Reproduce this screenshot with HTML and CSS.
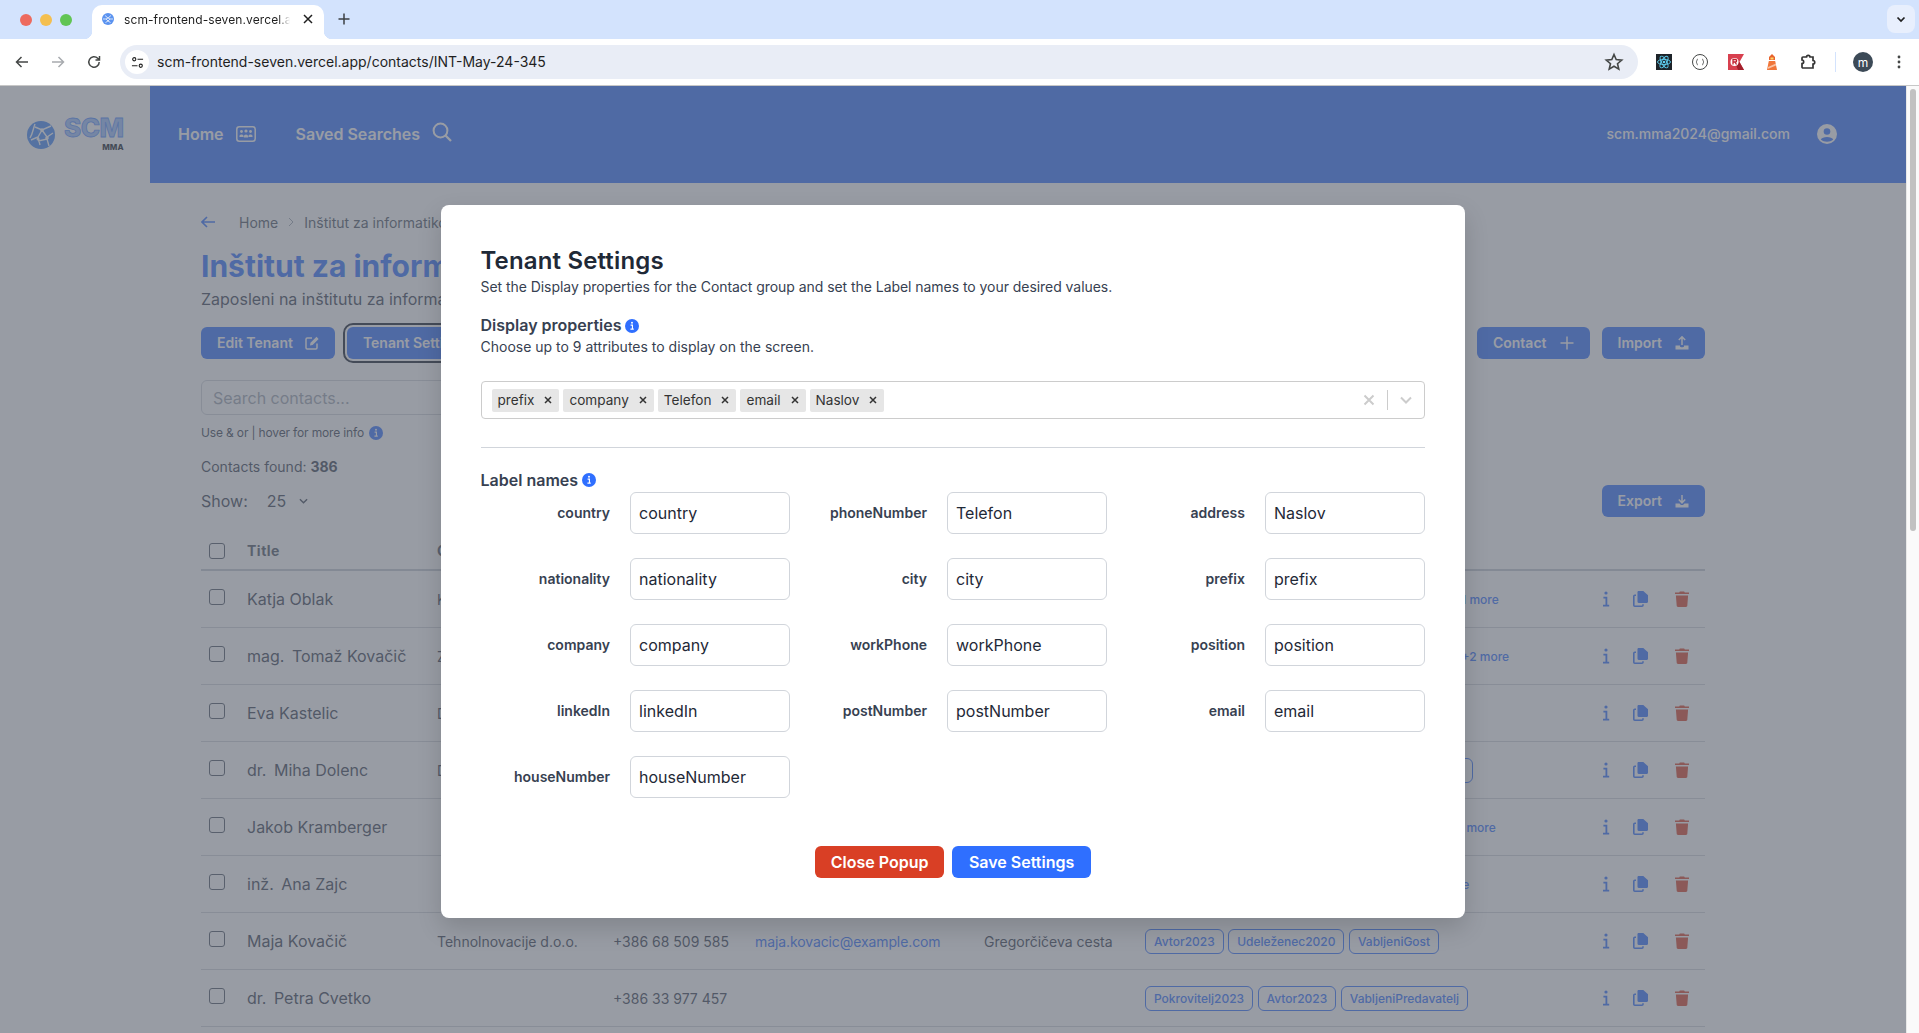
FILE: index.html
```html
<!DOCTYPE html>
<html lang="en">
<head>
    <meta charset="UTF-8">
    <title>scm-frontend-seven.vercel.app/contacts/INT-May-24-345</title>
    <link rel="stylesheet" href="styles.css">
</head>
<body>
    <!-- shared icons -->
    <svg class="icon-defs" aria-hidden="true">
        <symbol id="i-info" viewBox="0 0 8 16"><circle cx="4" cy="2" r="1.6" fill="currentColor"/><path d="M1.4 6.6H4.4V14.4M1 14.6H7.2" fill="none" stroke="currentColor" stroke-width="1.8"/></symbol>
        <symbol id="i-copy" viewBox="0 0 15 16"><path d="M4.500 1.200C4.500 .5 5 0 5.700 0H10.300L15 4.200V10.800C15 11.500 14.500 12 13.800 12H5.700C5 12 4.500 11.500 4.500 10.800Z" fill="currentColor"/><path d="M3 4.300H1.800C1.200 4.300.8 4.700.8 5.300V14.200C.8 14.800 1.200 15.200 1.800 15.200H9C9.600 15.200 10 14.800 10 14.200V13.200" fill="none" stroke="currentColor" stroke-width="1.600"/></symbol>
        <symbol id="i-trash" viewBox="1 0 14 16"><path d="M5.200 1.600 5.800.4H10.200L10.800 1.600H15V3H1V1.600ZM1.900 4.400H14.100L13.300 14.800C13.200 15.500 12.800 16 12 16H4C3.200 16 2.800 15.500 2.700 14.800Z" fill="currentColor"/></symbol>
        <symbol id="i-badge" viewBox="0 0 16 16"><circle cx="8" cy="8" r="8" fill="currentColor"/><circle cx="8" cy="4.300" r="1.100" fill="#fff"/><path d="M6.400 7H8.500V11.300M6.200 11.600H10" fill="none" stroke="#fff" stroke-width="1.300"/></symbol>
        <symbol id="i-cross" viewBox="0 0 14 14"><path d="M4 4 10 10M10 4 4 10" fill="none" stroke="currentColor" stroke-width="1.500"/></symbol>
    </svg>

    <div class="tabstrip">
        <div class="lights">
            <span class="light light-red"></span>
            <span class="light light-yellow"></span>
            <span class="light light-green"></span>
        </div>
        <div class="tab">
            <svg class="favicon" viewBox="0 0 12 12"><circle cx="6" cy="6" r="6" fill="#5b93f0"/><path d="M3 2.500 6 5 9 2.500M1 6H4L6 5 8 6H11M3.500 9.500 6 8 8.500 9.500M4 6 6 8 8 6" fill="none" stroke="#d6e4fb" stroke-width="1"/></svg>
            <span class="tab-title">scm-frontend-seven.vercel.app</span>
            <svg class="tab-close" viewBox="0 0 14 14"><path d="M3 3 11 11M11 3 3 11" fill="none" stroke="#1f1f1f" stroke-width="1.500"/></svg>
        </div>
        <svg class="new-tab" viewBox="0 0 14 14"><path d="M7 1.500V12.500M1.500 7H12.500" fill="none" stroke="#3c4043" stroke-width="1.500"/></svg>
        <div class="tab-list">
            <svg viewBox="0 0 12 12"><path d="M2.500 4.500 6 8 9.500 4.500" fill="none" stroke="#1f1f1f" stroke-width="1.700"/></svg>
        </div>
    </div>

    <div class="toolbar">
        <div class="tool"><svg viewBox="0 0 16 16"><path d="M14 8H2.500M7.500 3 2.500 8 7.500 13" fill="none" stroke="#444746" stroke-width="1.500"/></svg></div>
        <div class="tool"><svg viewBox="0 0 16 16"><path d="M2 8H13.500M8.500 3 13.500 8 8.500 13" fill="none" stroke="#a8abaf" stroke-width="1.500"/></svg></div>
        <div class="tool"><svg viewBox="0 0 16 16"><path d="M13.200 8A5.200 5.200 0 1 1 11.700 4.300L13.500 6M13.500 2V6H9.500" fill="none" stroke="#444746" stroke-width="1.500"/></svg></div>
        <div class="omnibox">
            <span class="site-info">
                <svg viewBox="0 0 14 14"><circle cx="3.500" cy="3.500" r="1.700" fill="none" stroke="#1f1f1f" stroke-width="1.200"/><path d="M7 3.500H13M1 10.500H7" stroke="#1f1f1f" stroke-width="1.200"/><circle cx="10.500" cy="10.500" r="1.700" fill="none" stroke="#1f1f1f" stroke-width="1.200"/></svg>
            </span>
            <span class="url">scm-frontend-seven.vercel.app/contacts/INT-May-24-345</span>
            <svg class="star" viewBox="0 0 20 20"><path d="M10 2.500 12.200 7.600 17.700 8.100 13.500 11.700 14.800 17.100 10 14.300 5.200 17.100 6.500 11.700 2.300 8.100 7.800 7.600Z" fill="none" stroke="#444746" stroke-width="1.600"/></svg>
        </div>
        <div class="extensions">
            <div class="tool">
                <svg viewBox="0 0 16 16"><rect width="16" height="16" fill="#1d2329"/><g fill="none" stroke="#5fd0f3" stroke-width=".9"><ellipse cx="8" cy="8" rx="6.500" ry="2.600"/><ellipse cx="8" cy="8" rx="6.500" ry="2.600" transform="rotate(60 8 8)"/><ellipse cx="8" cy="8" rx="6.500" ry="2.600" transform="rotate(120 8 8)"/></g><circle cx="8" cy="8" r="1.300" fill="#5fd0f3"/></svg>
            </div>
            <div class="tool">
                <svg viewBox="0 0 16 16"><circle cx="8" cy="8" r="7.500" fill="#fff" stroke="#444746" stroke-width="1"/><path d="M5.800 5C4.800 5 5.200 7.500 4 8 5.200 8.500 4.800 11 5.800 11M10.200 5C11.200 5 10.800 7.500 12 8 10.800 8.500 11.200 11 10.200 11" fill="none" stroke="#444746" stroke-width=".9"/></svg>
            </div>
            <div class="tool">
                <svg viewBox="0 0 16 16"><path d="M0 0H16L11.500 8 16 16H0Z" fill="#d8404f"/><path d="M8 11 11.500 8 16 16H10Z" fill="#a3202c"/><circle cx="6.500" cy="8" r="4" fill="#fff"/><path d="M5 10.500V5.500H7.500C9 5.500 9 8 7.500 8H5.500M7 8 8.500 10.500" fill="none" stroke="#c2202f" stroke-width="1.300"/></svg>
            </div>
            <div class="tool">
                <svg viewBox="0 0 16 16"><path d="M8 0 11 3V6H5V3Z" fill="#e8622c"/><path d="M4.800 7H11.200L13 16H3Z" fill="#f0763a"/><path d="M4 13 12 9.500V11.500L3.700 15Z" fill="#f9c2a4"/><rect x="6.500" y="3.500" width="3" height="2" fill="#fbd76b"/></svg>
            </div>
            <div class="tool">
                <svg viewBox="0 0 16 16"><path d="M5.500 3H6.500C6.500 .8 10 .8 10 3H13V6.500C15.300 6.500 15.300 10 13 10V14H3C2.400 14 2 13.600 2 13V9.500C4.200 9.500 4.200 6 2 6V4C2 3.400 2.400 3 3 3Z" fill="none" stroke="#333" stroke-width="1.700"/></svg>
            </div>
        </div>
        <span class="toolbar-sep"></span>
        <span class="avatar">m</span>
        <div class="tool"><svg viewBox="0 0 16 16"><g fill="#444746"><circle cx="8" cy="3" r="1.400"/><circle cx="8" cy="8" r="1.400"/><circle cx="8" cy="13" r="1.400"/></g></svg></div>
    </div>

    <div class="viewport">
        <div class="app">
            <header class="topbar">
                <div class="brand">
                    <svg class="brand-globe" viewBox="0 0 28 28">
                        <circle cx="14" cy="14" r="14" fill="#3f86f7"/>
                        <g fill="none" stroke="#fff" stroke-width="1.400">
                            <path d="M8 3C6 8 6 12 3 17M8 6 15 9 24 5M15 9 11 16 4 19M15 9 20 16 26 12M11 16 13 24M11 20 20 18 22 25M20 16 20 18"/>
                        </g>
                        <g fill="#fff"><circle cx="15" cy="9" r="1.800"/><circle cx="20" cy="17" r="1.800"/><circle cx="11" cy="18" r="1.500"/></g>
                    </svg>
                    <div class="brand-text">
                        <span class="brand-scm">SCM</span>
                        <span class="brand-mma">MMA</span>
                    </div>
                </div>
                <nav class="topnav">
                    <a class="nav-link">Home
                        <svg class="nav-icon" viewBox="0 0 20 16"><rect x=".8" y=".8" width="18.400" height="14.400" rx="2.500" fill="none" stroke="currentColor" stroke-width="1.500"/><g fill="currentColor"><circle cx="5.500" cy="5.500" r="1.400"/><circle cx="10" cy="5" r="1.600"/><circle cx="14.500" cy="5.500" r="1.400"/><path d="M3.500 10C3.500 8 7.500 8 7.500 10V11H3.500ZM7.800 11C7.800 7.700 12.200 7.700 12.200 11V11.500H7.800ZM12.500 10C12.500 8 16.500 8 16.500 10V11H12.500Z"/></g></svg>
                    </a>
                    <a class="nav-link">Saved Searches
                        <svg class="nav-icon nav-icon-up" viewBox="0 0 20 20"><circle cx="8.500" cy="8.500" r="6.900" fill="none" stroke="currentColor" stroke-width="2"/><path d="M13.500 13.500 19 19" stroke="currentColor" stroke-width="2.300"/></svg>
                    </a>
                </nav>
                <div class="account">
                    <span>scm.mma2024@gmail.com</span>
                    <svg class="account-icon" viewBox="0 0 20 20"><circle cx="10" cy="10" r="10" fill="currentColor"/><circle cx="10" cy="7.500" r="3.300" fill="#2f6fff"/><path d="M3.800 15.500C5 12 15 12 16.200 15.500 13 18.500 7 18.500 3.800 15.500Z" fill="#2f6fff"/></svg>
                </div>
            </header>

            <main class="content">
                <div class="crumbs">
                    <svg class="crumb-back" viewBox="0 0 14 12"><path d="M14 6H1M6 1 1 6 6 11" fill="none" stroke="currentColor" stroke-width="1.600"/></svg>
                    <span>Home</span>
                    <svg class="crumb-sep" viewBox="0 0 6 10"><path d="M1 1 5 5 1 9" fill="none" stroke="currentColor" stroke-width="1"/></svg>
                    <span>Inštitut za informatiko</span>
                </div>
                <h1 class="page-title">Inštitut za informatiko</h1>
                <p class="page-sub">Zaposleni na inštitutu za informatiko</p>

                <div class="actions">
                    <button class="btn">Edit Tenant
                        <svg class="btn-icon" viewBox="0 0 14 14"><path d="M7 2H2.200C1.500 2 1 2.500 1 3.200V11.800C1 12.500 1.500 13 2.200 13H10.800C11.500 13 12 12.500 12 11.800V7.500" fill="none" stroke="currentColor" stroke-width="1.500"/><path d="M5 9.500 5.500 6.800 11.500.8 13.600 2.900 7.600 8.900Z" fill="currentColor"/></svg>
                    </button>
                    <button class="btn btn-focus">Tenant Settings</button>
                    <div class="actions-right">
                        <button class="btn">Contact
                            <svg class="btn-icon" viewBox="0 0 14 14"><path d="M7 .5V13.500M.5 7H13.500" stroke="currentColor" stroke-width="1.500"/></svg>
                        </button>
                        <button class="btn">Import
                            <svg class="btn-icon" viewBox="0 0 14 14"><path d="M7 9V1M3.800 4 7 .8 10.200 4" fill="none" stroke="currentColor" stroke-width="1.500"/><path d="M.5 9.500H5V10.500C5 11.500 9 11.500 9 10.500V9.500H13.500V13.500H.5Z" fill="currentColor"/></svg>
                        </button>
                    </div>
                </div>

                <div class="search">Search contacts...</div>
                <p class="hint"><span class="hint-text">Use &amp; or | hover for more info</span>
                    <svg class="badge badge-muted"><use href="#i-badge"/></svg>
                </p>
                <p class="found">Contacts found: <b>386</b></p>

                <div class="list-bar">
                    <span class="show-label">Show:</span>
                    <span class="show-value">25</span>
                    <svg class="show-caret" viewBox="0 0 10 6"><path d="M1 1 5 5 9 1" fill="none" stroke="currentColor" stroke-width="1.500"/></svg>
                    <button class="btn btn-export">Export
                        <svg class="btn-icon" viewBox="0 0 14 14"><path d="M7 1V8.500M3.800 5.500 7 8.800 10.200 5.500" fill="none" stroke="currentColor" stroke-width="1.500"/><path d="M.5 9.500H4.500L6 11H8L9.500 9.500H13.500V13.500H.5Z" fill="currentColor"/></svg>
                    </button>
                </div>

                <div class="table">
                    <div class="row row-head">
                        <span class="check"></span>
                        <span class="head-text">Title</span>
                        <span class="head-text">C</span>
                    </div>
                    <div class="row">
                        <span class="check"></span>
                        <span class="name">Katja Oblak</span>
                        <span class="cell">K</span>
                        <span></span><span></span><span></span>
                        <div class="tags tags-near"><span class="tag">Avtor2023</span><span class="tag">VabljeniGost</span><span class="tag">VabljeniPredavatelj</span><span class="more">+1 more</span></div>
                        <div class="row-actions">
                            <svg class="act act-info"><use href="#i-info"/></svg>
                            <svg class="act act-copy"><use href="#i-copy"/></svg>
                            <svg class="act act-trash"><use href="#i-trash"/></svg>
                        </div>
                    </div>
                    <div class="row">
                        <span class="check"></span>
                        <span class="name"><span class="honor">mag.</span> Tomaž Kovačič</span>
                        <span class="cell">Z</span>
                        <span></span><span></span><span></span>
                        <div class="tags"><span class="tag">Pokrovitelj2023</span><span class="tag">Avtor2023</span><span class="tag">Udeleženec2020</span><span class="more">+2 more</span></div>
                        <div class="row-actions">
                            <svg class="act act-info"><use href="#i-info"/></svg>
                            <svg class="act act-copy"><use href="#i-copy"/></svg>
                            <svg class="act act-trash"><use href="#i-trash"/></svg>
                        </div>
                    </div>
                    <div class="row">
                        <span class="check"></span>
                        <span class="name">Eva Kastelic</span>
                        <span class="cell">D</span>
                        <span></span><span></span><span></span>
                        <div class="tags"><span class="tag">Avtor2023</span></div>
                        <div class="row-actions">
                            <svg class="act act-info"><use href="#i-info"/></svg>
                            <svg class="act act-copy"><use href="#i-copy"/></svg>
                            <svg class="act act-trash"><use href="#i-trash"/></svg>
                        </div>
                    </div>
                    <div class="row">
                        <span class="check"></span>
                        <span class="name"><span class="honor">dr.</span> Miha Dolenc</span>
                        <span class="cell">D</span>
                        <span></span><span></span><span></span>
                        <div class="tags tags-tight"><span class="tag">Avtor2023</span><span class="tag">Udeleženec2020</span><span class="tag">VabljeniPredavatelj</span></div>
                        <div class="row-actions">
                            <svg class="act act-info"><use href="#i-info"/></svg>
                            <svg class="act act-copy"><use href="#i-copy"/></svg>
                            <svg class="act act-trash"><use href="#i-trash"/></svg>
                        </div>
                    </div>
                    <div class="row">
                        <span class="check"></span>
                        <span class="name">Jakob Kramberger</span>
                        <span></span>
                        <span></span><span></span><span></span>
                        <div class="tags tags-tight"><span class="tag">VabljeniPredavatelj</span><span class="tag">Avtor2023</span><span class="tag">VabljeniGost</span><span class="more">+1 more</span></div>
                        <div class="row-actions">
                            <svg class="act act-info"><use href="#i-info"/></svg>
                            <svg class="act act-copy"><use href="#i-copy"/></svg>
                            <svg class="act act-trash"><use href="#i-trash"/></svg>
                        </div>
                    </div>
                    <div class="row">
                        <span class="check"></span>
                        <span class="name"><span class="honor">inž.</span> Ana Zajc</span>
                        <span></span>
                        <span></span><span></span><span></span>
                        <div class="tags"><span class="tag">Avtor2022</span><span class="tag">Avtor2023</span><span class="tag">Pokrovitelj2023</span><span class="more">+1 more</span></div>
                        <div class="row-actions">
                            <svg class="act act-info"><use href="#i-info"/></svg>
                            <svg class="act act-copy"><use href="#i-copy"/></svg>
                            <svg class="act act-trash"><use href="#i-trash"/></svg>
                        </div>
                    </div>
                    <div class="row">
                        <span class="check"></span>
                        <span class="name">Maja Kovačič</span>
                        <span class="cell">Tehnolnovacije d.o.o.</span>
                        <span class="cell">+386 68 509 585</span>
                        <a class="cell mail">maja.kovacic@example.com</a>
                        <span class="cell">Gregorčičeva cesta</span>
                        <div class="tags"><span class="tag">Avtor2023</span><span class="tag">Udeleženec2020</span><span class="tag">VabljeniGost</span></div>
                        <div class="row-actions">
                            <svg class="act act-info"><use href="#i-info"/></svg>
                            <svg class="act act-copy"><use href="#i-copy"/></svg>
                            <svg class="act act-trash"><use href="#i-trash"/></svg>
                        </div>
                    </div>
                    <div class="row">
                        <span class="check"></span>
                        <span class="name"><span class="honor">dr.</span> Petra Cvetko</span>
                        <span></span>
                        <span class="cell">+386 33 977 457</span>
                        <span></span><span></span>
                        <div class="tags"><span class="tag">Pokrovitelj2023</span><span class="tag">Avtor2023</span><span class="tag">VabljeniPredavatelj</span></div>
                        <div class="row-actions">
                            <svg class="act act-info"><use href="#i-info"/></svg>
                            <svg class="act act-copy"><use href="#i-copy"/></svg>
                            <svg class="act act-trash"><use href="#i-trash"/></svg>
                        </div>
                    </div>
                </div>
            </main>

            <div class="overlay">
                <div class="modal">
                    <h2 class="modal-title">Tenant Settings</h2>
                    <p class="modal-sub modal-lead">Set the Display properties for the Contact group and set the Label names to your desired values.</p>

                    <h3 class="section-title">Display properties
                        <svg class="badge"><use href="#i-badge"/></svg>
                    </h3>
                    <p class="modal-sub">Choose up to 9 attributes to display on the screen.</p>

                    <div class="select">
                        <div class="chips">
                            <span class="chip">prefix<svg class="chip-x"><use href="#i-cross"/></svg></span>
                            <span class="chip">company<svg class="chip-x"><use href="#i-cross"/></svg></span>
                            <span class="chip">Telefon<svg class="chip-x"><use href="#i-cross"/></svg></span>
                            <span class="chip">email<svg class="chip-x"><use href="#i-cross"/></svg></span>
                            <span class="chip">Naslov<svg class="chip-x"><use href="#i-cross"/></svg></span>
                        </div>
                        <svg class="select-clear" viewBox="0 0 12 12"><path d="M1.500 1.500 10.500 10.500M10.500 1.500 1.500 10.500" fill="none" stroke="currentColor" stroke-width="2"/></svg>
                        <span class="select-sep"></span>
                        <svg class="select-caret" viewBox="0 0 12 8"><path d="M1 1.500 6 6.500 11 1.500" fill="none" stroke="currentColor" stroke-width="2"/></svg>
                    </div>

                    <hr class="modal-rule">

                    <h3 class="section-title section-labels">Label names
                        <svg class="badge"><use href="#i-badge"/></svg>
                    </h3>
                    <div class="label-grid">
                        <label class="field"><span class="field-name">country</span><input value="country"></label>
                        <label class="field"><span class="field-name">phoneNumber</span><input value="Telefon"></label>
                        <label class="field"><span class="field-name">address</span><input value="Naslov"></label>
                        <label class="field"><span class="field-name">nationality</span><input value="nationality"></label>
                        <label class="field"><span class="field-name">city</span><input value="city"></label>
                        <label class="field"><span class="field-name">prefix</span><input value="prefix"></label>
                        <label class="field"><span class="field-name">company</span><input value="company"></label>
                        <label class="field"><span class="field-name">workPhone</span><input value="workPhone"></label>
                        <label class="field"><span class="field-name">position</span><input value="position"></label>
                        <label class="field"><span class="field-name">linkedIn</span><input value="linkedIn"></label>
                        <label class="field"><span class="field-name">postNumber</span><input value="postNumber"></label>
                        <label class="field"><span class="field-name">email</span><input value="email"></label>
                        <label class="field"><span class="field-name">houseNumber</span><input value="houseNumber"></label>
                    </div>

                    <div class="modal-foot">
                        <button class="foot-btn foot-close">Close Popup</button>
                        <button class="foot-btn foot-save">Save Settings</button>
                    </div>
                </div>
            </div>
        </div>
        <div class="scrollbar"><span class="scroll-thumb"></span></div>
    </div>
</body>
</html>
```

FILE: styles.css
```css
* {
    margin: 0;
    padding: 0;
    box-sizing: border-box;
}

html,
body {
    height: 100%;
    overflow: hidden;
}

body {
    font-family: Inter, "Noto Sans", sans-serif;
    background: #ffffff;
    color: #111827;
}

.icon-defs {
    position: absolute;
    width: 0;
    height: 0;
}

/* Browser chrome */
.tabstrip {
    height: 39px;
    background: #d3e3fd;
    display: flex;
    align-items: flex-end;
}

.lights {
    display: flex;
    gap: 8px;
    padding-left: 20px;
    align-self: center;
}

.light {
    width: 12px;
    height: 12px;
    border-radius: 50%;
}

.light-red { background: #ed6a5e; }
.light-yellow { background: #f4bf4f; }
.light-green { background: #61c554; }

.tab {
    position: relative;
    margin-left: 20px;
    width: 232px;
    height: 34px;
    background: #ffffff;
    border-radius: 10px 10px 0 0;
    display: flex;
    align-items: center;
    padding-left: 10px;
    padding-bottom: 6px;
}

.tab::before,
.tab::after {
    content: '';
    position: absolute;
    bottom: 0;
    width: 8px;
    height: 8px;
}

.tab::before {
    left: -8px;
    background: radial-gradient(circle at 0 0, transparent 8px, #ffffff 8.5px);
}

.tab::after {
    right: -8px;
    background: radial-gradient(circle at 100% 0, transparent 8px, #ffffff 8.5px);
}

.favicon {
    width: 12px;
    height: 12px;
    flex: none;
}

.tab-title {
    margin-left: 10px;
    width: 166px;
    overflow: hidden;
    white-space: nowrap;
    font-size: 12px;
    letter-spacing: 0.1px;
    color: #1f1f1f;
    -webkit-mask-image: linear-gradient(90deg, #000 93%, transparent);
    mask-image: linear-gradient(90deg, #000 93%, transparent);
}

.tab-close {
    margin-left: 11px;
    width: 14px;
    height: 14px;
}

.new-tab {
    width: 14px;
    height: 14px;
    margin: 0 0 13px 13px;
}

.tab-list {
    margin-left: auto;
    margin-right: 4px;
    align-self: flex-start;
    margin-top: 5px;
    width: 28px;
    height: 28px;
    background: #e8effd;
    border-radius: 8px;
    display: flex;
    align-items: center;
    justify-content: center;
}

.tab-list svg {
    width: 12px;
    height: 12px;
}

.toolbar {
    height: 47px;
    background: #ffffff;
    border-bottom: 1px solid #c7c7c7;
    display: flex;
    align-items: center;
    padding-left: 4px;
}

.tool {
    width: 36px;
    height: 32px;
    display: flex;
    align-items: center;
    justify-content: center;
    flex: none;
}

.tool svg {
    width: 16px;
    height: 16px;
}

.omnibox {
    margin-left: 8px;
    width: 1518px;
    height: 34px;
    border-radius: 17px;
    background: #e9edf6;
    display: flex;
    align-items: center;
    padding-left: 5px;
    padding-right: 14px;
}

.site-info {
    width: 24px;
    height: 24px;
    border-radius: 50%;
    background: #ffffff;
    display: flex;
    align-items: center;
    justify-content: center;
}

.site-info svg {
    width: 13px;
    height: 13px;
}

.url {
    margin-left: 8px;
    padding-bottom: 1px;
    font-size: 14px;
    color: #1f1f1f;
}

.star {
    margin-left: auto;
    width: 20px;
    height: 20px;
}

.extensions {
    display: flex;
    margin-left: 8px;
}

.toolbar-sep {
    margin-left: 9px;
    width: 1px;
    height: 20px;
    background: #d3e3fd;
}

.avatar {
    margin-left: 17px;
    margin-right: 8px;
    width: 20px;
    height: 20px;
    border-radius: 50%;
    background: #3c4a57;
    color: #ffffff;
    font-size: 12px;
    display: flex;
    align-items: center;
    justify-content: center;
    flex: none;
}

/* Page */
.viewport {
    height: 947px;
    display: flex;
    overflow: hidden;
}

.app {
    position: relative;
    flex: 1;
    overflow: hidden;
}

.scrollbar {
    width: 13px;
    background: #fafafa;
    border-left: 1px solid #e8e8e8;
    padding: 3px 3px 0;
}

.scroll-thumb {
    display: block;
    width: 6px;
    height: 442px;
    border-radius: 3px;
    background: #c1c1c1;
}

.topbar {
    height: 97px;
    display: flex;
    align-items: center;
}

.brand {
    width: 150px;
    height: 100%;
    display: flex;
    align-items: center;
    padding-left: 27px;
    gap: 9px;
    flex: none;
}

.brand-globe {
    width: 28px;
    height: 28px;
}

.brand-text {
    display: flex;
    flex-direction: column;
    align-items: flex-end;
    margin-top: -1px;
}

.brand-scm {
    font-size: 26px;
    line-height: 24px;
    font-weight: 800;
    letter-spacing: -0.5px;
    color: #9cc0ff;
    -webkit-text-stroke: 0.8px #4d8cff;
}

.brand-mma {
    margin-top: 3px;
    font-size: 8px;
    line-height: 9px;
    font-weight: 800;
    color: #111827;
}

.topnav {
    flex: 1;
    height: 100%;
    display: flex;
    align-items: center;
    padding: 0 0 2px 28px;
    gap: 40px;
    background: #2f6fff;
    color: #ffffff;
}

.nav-link {
    display: flex;
    align-items: center;
    gap: 12px;
    font-size: 16px;
    font-weight: 600;
}

.nav-icon {
    width: 20px;
    height: 20px;
}

.nav-icon-up {
    margin-bottom: 4px;
}

.account {
    position: absolute;
    right: 69px;
    top: 0;
    height: 97px;
    padding-bottom: 2px;
    display: flex;
    align-items: center;
    gap: 27px;
    color: #ffffff;
    font-size: 14px;
    font-weight: 500;
}

.account-icon {
    width: 20px;
    height: 20px;
}

.content {
    padding: 29px 201px 0;
}

.crumbs {
    height: 20px;
    display: flex;
    align-items: center;
    font-size: 14px;
    color: #4b5563;
}

.crumb-back {
    width: 14px;
    height: 12px;
    margin-right: 24px;
    color: #2f6fff;
}

.crumb-sep {
    width: 6px;
    height: 10px;
    margin: 0 10px;
    color: #9ca3af;
}

.page-title {
    margin-top: 16px;
    font-size: 30px;
    line-height: 36px;
    font-weight: 700;
    color: #2f6fff;
    white-space: nowrap;
}

.page-sub {
    margin-top: 3px;
    font-size: 16px;
    line-height: 24px;
    color: #374151;
}

.actions {
    margin-top: 16px;
    display: flex;
    gap: 12px;
}

.actions-right {
    margin-left: auto;
    display: flex;
    gap: 12px;
}

.btn {
    height: 32px;
    padding: 0 16px 1px;
    display: inline-flex;
    align-items: center;
    gap: 12px;
    border: none;
    border-radius: 6px;
    background: #2f6fff;
    color: #ffffff;
    font-family: inherit;
    font-size: 14px;
    font-weight: 600;
}

.actions-right .btn,
.btn-export {
    gap: 13px;
}

.btn-focus {
    outline: 2px solid #111827;
    outline-offset: 2px;
}

.btn-icon {
    width: 14px;
    height: 14px;
}

.search {
    margin-top: 21px;
    width: 900px;
    height: 35px;
    border: 1px solid #d1d5db;
    border-radius: 6px;
    padding-left: 11px;
    display: flex;
    align-items: center;
    font-size: 16px;
    color: #9ca3af;
}

.hint {
    margin-top: 10px;
    font-size: 12px;
    line-height: 16px;
    color: #374151;
    display: flex;
    align-items: center;
    gap: 5px;
}

.hint-text {
    letter-spacing: -0.15px;
}

.badge {
    width: 14px;
    height: 14px;
    color: #2f6fff;
    flex: none;
}

.found {
    margin-top: 16px;
    font-size: 14px;
    line-height: 20px;
    color: #374151;
}

.list-bar {
    margin-top: 8px;
    height: 32px;
    display: flex;
    align-items: center;
    color: #374151;
}

.show-label {
    font-size: 16px;
}

.show-value {
    margin-left: 19px;
    font-size: 16px;
}

.show-caret {
    margin-left: 13px;
    width: 9px;
    height: 6px;
}

.btn-export {
    margin-left: auto;
}

.table {
    margin-top: 16px;
}

.row {
    display: grid;
    grid-template-columns: 46px 190px 176px 142px 229px 161px 1fr 114px;
    align-items: center;
    height: 57px;
    border-bottom: 1px solid #d1d5db;
}

.row-head {
    height: 38px;
    border-bottom: 2px solid #c4c8d0;
    font-size: 14px;
    font-weight: 700;
    letter-spacing: 0.5px;
    color: #4b5563;
}

.head-text {
    margin-bottom: 2px;
}

.check {
    margin-left: 8px;
    width: 16px;
    height: 16px;
    border: 1px solid #4b5563;
    border-radius: 3px;
}

.row .check {
    margin-bottom: 4px;
}

.row-head .check {
    margin-bottom: 0;
}

.name {
    font-size: 16px;
    color: #374151;
}

.honor {
    margin-right: 3px;
}

.cell {
    font-size: 14px;
    color: #374151;
    white-space: nowrap;
}

.mail {
    color: #2f6fff;
    letter-spacing: -0.1px;
}

.tags {
    display: flex;
    align-items: center;
    gap: 4.5px;
    white-space: nowrap;
}

.tags-tight {
    gap: 3px;
}

.tags-near {
    gap: 4px;
}

.tag {
    height: 25px;
    padding: 0 8px;
    display: flex;
    align-items: center;
    border: 1px solid #2f6fff;
    border-radius: 6px;
    font-size: 12px;
    font-weight: 500;
    color: #2f6fff;
}

.more {
    font-size: 12px;
    font-weight: 500;
    color: #2f6fff;
}

.row-actions {
    display: flex;
    align-items: center;
}

.act {
    height: 16px;
}

.act-info {
    width: 8px;
    margin-left: 11px;
    color: #2f6fff;
}

.act-copy {
    width: 15px;
    margin-left: 23px;
    color: #2f6fff;
}

.act-trash {
    width: 14px;
    margin-left: 27px;
    color: #d93f25;
}

/* Popup */
.overlay {
    position: absolute;
    inset: 0;
    background: rgba(97, 103, 115, 0.65);
    display: flex;
    justify-content: center;
    align-items: flex-start;
    padding-top: 119px;
}

.modal {
    width: 1024px;
    padding: 40px 40px 40px 39.5px;
    background: #ffffff;
    border-radius: 8px;
    box-shadow: 0 10px 25px rgba(0, 0, 0, 0.15);
}

.modal-title {
    font-size: 24px;
    line-height: 32px;
    font-weight: 600;
    letter-spacing: 0.15px;
    color: #1f2937;
}

.modal-sub {
    font-size: 14px;
    line-height: 20px;
    color: #374151;
}

.modal-lead {
    letter-spacing: -0.05px;
}

.section-title {
    margin-top: 17px;
    font-size: 16px;
    line-height: 23px;
    font-weight: 600;
    color: #374151;
    display: flex;
    align-items: center;
    gap: 4px;
}

.select {
    margin-top: 24px;
    height: 38px;
    border: 1px solid #cccccc;
    border-radius: 4px;
    display: flex;
    align-items: center;
    padding: 0 8px;
    color: #cccccc;
}

.chips {
    flex: 1;
    display: flex;
    gap: 4px;
    padding-left: 2px;
}

.chip {
    height: 23px;
    background: #e6e6e6;
    border-radius: 2px;
    padding: 0 0 1px 6px;
    display: flex;
    align-items: center;
    font-size: 13.6px;
    color: #333333;
}

.chip-x {
    width: 14px;
    height: 14px;
    margin: 0 4px 0 7px;
    color: #333333;
}

.select-clear {
    width: 12px;
    height: 12px;
    margin-right: 12px;
}

.select-sep {
    width: 1px;
    height: 20px;
    background: #cccccc;
}

.select-caret {
    width: 12px;
    height: 8px;
    margin: 0 4px 0 12px;
}

.modal-rule {
    margin-top: 28px;
    border: none;
    border-top: 1px solid #d1d5db;
}

.section-labels {
    margin-top: 21px;
    padding-bottom: 1px;
    line-height: 22px;
}

.label-grid {
    display: grid;
    grid-template-columns: 309.5px 309px 310px;
    gap: 24px 8px;
}

.field {
    display: flex;
    align-items: center;
    justify-content: flex-end;
    gap: 20px;
    font-size: 14px;
    font-weight: 600;
    color: #374151;
}

.field-name {
    padding-bottom: 1px;
}

.field input {
    width: 160px;
    height: 42px;
    padding: 0 8px;
    border: 1px solid #d1d5db;
    border-radius: 6px;
    font-family: inherit;
    font-size: 16px;
    color: #1f2937;
}

.modal-foot {
    margin-top: 48px;
    display: flex;
    justify-content: center;
    gap: 8px;
}

.foot-btn {
    height: 32px;
    padding: 0 16px;
    border: none;
    border-radius: 6px;
    color: #ffffff;
    font-family: inherit;
    font-size: 16px;
    font-weight: 600;
}

.foot-close {
    background: #d93f25;
}

.foot-save {
    padding: 0 16.5px;
    background: #2f6fff;
}
```
